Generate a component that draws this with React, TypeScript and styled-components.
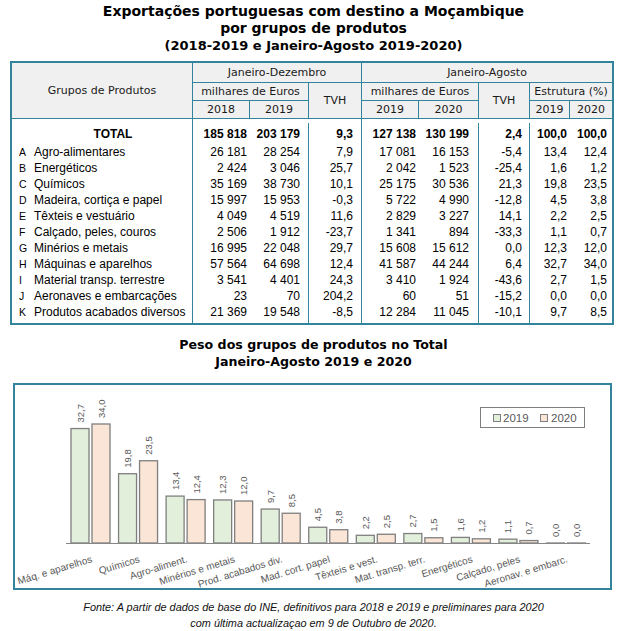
import React from "react";
import styled, { createGlobalStyle } from "styled-components";

const teal = "#31849B";

const Global = createGlobalStyle`
  body { margin: 0; background: #fff; }
  * { box-sizing: border-box; }
`;

const Page = styled.div`
  width: 627px;
  font-family: "Liberation Sans", Arial, sans-serif;
  color: #000;
`;

const Title = styled.h1`
  margin: 0;
  padding-top: 3px;
  text-align: center;
  font: bold 14px/17px "DejaVu Sans", Verdana, sans-serif;
  color: #000;
`;

const TitleSub = styled.span`
  display: block;
  font-size: 13px;
`;

const Grid = styled.div`
  margin: 7px 0 0 10px;
  width: 604px;
  border: 2px solid ${teal};
  display: grid;
  grid-template-columns: 180px 57px 59px 53px 57px 60px 51px 40px 43px;
  grid-template-rows: 20px 18px 18px 25px repeat(10, 16px) 19px;
`;

const HeadCell = styled.div<{ $col: string; $row: string; $first?: boolean }>`
  grid-column: ${(p) => p.$col};
  grid-row: ${(p) => p.$row};
  display: flex;
  align-items: center;
  justify-content: center;
  background: #f0f0f0;
  border-bottom: 1px solid ${teal};
  border-left: ${(p) => (p.$first ? "none" : `1px solid ${teal}`)};
  font: 11px "DejaVu Sans", Verdana, sans-serif;
  color: #1a1a1a;
  white-space: nowrap;
`;

const NameCell = styled.div<{ $total?: boolean; $last?: boolean }>`
  display: flex;
  align-items: center;
  padding-left: 7px;
  padding-top: ${(p) => (p.$total ? "5px" : "0")};
  padding-bottom: ${(p) => (p.$last ? "3px" : "0")};
  font-size: 12px;
  white-space: nowrap;
`;

const Letter = styled.span`
  width: 15px;
  font-size: 10.5px;
`;

const Name = styled.span<{ $total?: boolean }>`
  flex: 1;
  text-align: ${(p) => (p.$total ? "center" : "left")};
  font-weight: ${(p) => (p.$total ? "bold" : "normal")};
`;

type Line = "none" | "solid" | "gap";

const NumCell = styled.div<{ $pr: number; $line: Line; $total?: boolean; $last?: boolean }>`
  display: flex;
  align-items: center;
  justify-content: flex-end;
  padding-right: ${(p) => p.$pr}px;
  padding-top: ${(p) => (p.$total ? "5px" : "0")};
  padding-bottom: ${(p) => (p.$last ? "3px" : "0")};
  border-left: ${(p) => (p.$line === "solid" ? `1px solid ${teal}` : "none")};
  background: ${(p) =>
    p.$line === "gap" ? `linear-gradient(${teal}, ${teal}) 0 4px / 1px 100% no-repeat` : "none"};
  font-size: 12px;
  font-weight: ${(p) => (p.$total ? "bold" : "normal")};
  white-space: nowrap;
`;

const ChartTitle = styled.h2`
  margin: 11px 0 0;
  text-align: center;
  font: bold 12.6px/17px "DejaVu Sans", Verdana, sans-serif;
  color: #000;
`;

const ChartBox = styled.div`
  margin: 13px 0 0 13px;
  width: 599px;
  height: 207px;
  border: 2px solid ${teal};
  svg {
    display: block;
  }
`;

const Footer = styled.p`
  margin: 9px 0 0;
  text-align: center;
  font: italic 10.9px/16px "Liberation Sans", Arial, sans-serif;
  color: #111;
`;

const pads = [2, 8, 8, 2, 9, 7, 2, 5];
const lines: Line[] = ["solid", "none", "gap", "solid", "none", "gap", "gap", "none"];

const total = ["185 818", "203 179", "9,3", "127 138", "130 199", "2,4", "100,0", "100,0"];

const rows: string[][] = [
  ["A", "Agro-alimentares", "26 181", "28 254", "7,9", "17 081", "16 153", "-5,4", "13,4", "12,4"],
  ["B", "Energéticos", "2 424", "3 046", "25,7", "2 042", "1 523", "-25,4", "1,6", "1,2"],
  ["C", "Químicos", "35 169", "38 730", "10,1", "25 175", "30 536", "21,3", "19,8", "23,5"],
  ["D", "Madeira, cortiça e papel", "15 997", "15 953", "-0,3", "5 722", "4 990", "-12,8", "4,5", "3,8"],
  ["E", "Têxteis e vestuário", "4 049", "4 519", "11,6", "2 829", "3 227", "14,1", "2,2", "2,5"],
  ["F", "Calçado, peles, couros", "2 506", "1 912", "-23,7", "1 341", "894", "-33,3", "1,1", "0,7"],
  ["G", "Minérios e metais", "16 995", "22 048", "29,7", "15 608", "15 612", "0,0", "12,3", "12,0"],
  ["H", "Máquinas e aparelhos", "57 564", "64 698", "12,4", "41 587", "44 244", "6,4", "32,7", "34,0"],
  ["I", "Material transp. terrestre", "3 541", "4 401", "24,3", "3 410", "1 924", "-43,6", "2,7", "1,5"],
  ["J", "Aeronaves e embarcações", "23", "70", "204,2", "60", "51", "-15,2", "0,0", "0,0"],
  ["K", "Produtos acabados diversos", "21 369", "19 548", "-8,5", "12 284", "11 045", "-10,1", "9,7", "8,5"],
];

const chart: [string, number, number][] = [
  ["Máq. e aparelhos", 32.7, 34.0],
  ["Químicos", 19.8, 23.5],
  ["Agro-aliment.", 13.4, 12.4],
  ["Minérios e metais", 12.3, 12.0],
  ["Prod. acabados div.", 9.7, 8.5],
  ["Mad. cort. papel", 4.5, 3.8],
  ["Têxteis e vest.", 2.2, 2.5],
  ["Mat. transp. terr.", 2.7, 1.5],
  ["Energéticos", 1.6, 1.2],
  ["Calçado, peles", 1.1, 0.7],
  ["Aeronav. e embarc.", 0.0, 0.0],
];

const fmt = (v: number) => v.toFixed(1).replace(".", ",");

const BASE = 543;
const SCALE = 3.5;
const X0 = 66;
const STEP = 47.55;
const BW = 18;
const C19 = "#E2EFDA";
const C20 = "#FBE5D6";
const STROKE = "#7F7F7F";
const LABEL = "#595959";

function Chart() {
  return (
    <svg width={595} height={203} viewBox="15 385 595 203" fontFamily='"Liberation Sans", Arial, sans-serif'>
      {chart.map(([name, a, b], i) => {
        const start = X0 + i * STEP;
        const x1 = start + 5;
        const x2 = start + 26;
        const h1 = a * SCALE;
        const h2 = b * SCALE;
        const center = start + STEP / 2;
        return (
          <g key={name}>
            <rect x={x1} y={BASE - h1} width={BW} height={Math.max(h1, 0.01)} fill={C19} stroke={STROKE} strokeWidth={1.3} />
            <rect x={x2} y={BASE - h2} width={BW} height={Math.max(h2, 0.01)} fill={C20} stroke={STROKE} strokeWidth={1.3} />
            <text transform={`translate(${x1 + BW / 2 + 3.5},${BASE - h1 - 6}) rotate(-90)`} fontSize={9.5} fill={LABEL}>
              {fmt(a)}
            </text>
            <text transform={`translate(${x2 + BW / 2 + 3.5},${BASE - h2 - 6}) rotate(-90)`} fontSize={9.5} fill={LABEL}>
              {fmt(b)}
            </text>
            <text transform={`translate(${center + 3},${562}) rotate(-17)`} textAnchor="end" fontSize={10} fill={LABEL}>
              {name}
            </text>
          </g>
        );
      })}
      <line x1={X0} x2={590} y1={BASE + 0.5} y2={BASE + 0.5} stroke="#868686" strokeWidth={1} />
      <rect x={480.5} y={407.5} width={104} height={20} fill="#fff" stroke={STROKE} strokeWidth={1} />
      <rect x={493.5} y={414.5} width={7} height={7} fill={C19} stroke={STROKE} strokeWidth={1} />
      <text x={503} y={422} fontSize={11.5} fill={LABEL}>2019</text>
      <rect x={540.5} y={414.5} width={7} height={7} fill={C20} stroke={STROKE} strokeWidth={1} />
      <text x={551} y={422} fontSize={11.5} fill={LABEL}>2020</text>
    </svg>
  );
}

export default function App() {
  return (
    <Page>
      <Global />
      <Title>
        Exportações portuguesas com destino a Moçambique
        <br />
        por grupos de produtos
        <TitleSub>(2018-2019 e Janeiro-Agosto 2019-2020)</TitleSub>
      </Title>

      <Grid>
        <HeadCell $col="1" $row="1 / 4" $first>Grupos de Produtos</HeadCell>
        <HeadCell $col="2 / 5" $row="1">Janeiro-Dezembro</HeadCell>
        <HeadCell $col="5 / 10" $row="1">Janeiro-Agosto</HeadCell>
        <HeadCell $col="2 / 4" $row="2">milhares de Euros</HeadCell>
        <HeadCell $col="4" $row="2 / 4">TVH</HeadCell>
        <HeadCell $col="5 / 7" $row="2">milhares de Euros</HeadCell>
        <HeadCell $col="7" $row="2 / 4">TVH</HeadCell>
        <HeadCell $col="8 / 10" $row="2">Estrutura (%)</HeadCell>
        <HeadCell $col="2" $row="3">2018</HeadCell>
        <HeadCell $col="3" $row="3">2019</HeadCell>
        <HeadCell $col="5" $row="3">2019</HeadCell>
        <HeadCell $col="6" $row="3">2020</HeadCell>
        <HeadCell $col="8" $row="3">2019</HeadCell>
        <HeadCell $col="9" $row="3">2020</HeadCell>

        <NameCell $total>
          <Letter />
          <Name $total>TOTAL</Name>
        </NameCell>
        {total.map((v, i) => (
          <NumCell key={`t${i}`} $pr={pads[i]} $line={lines[i]} $total>
            {v}
          </NumCell>
        ))}

        {rows.map((r, ri) => {
          const last = ri === rows.length - 1;
          return (
            <React.Fragment key={r[0]}>
              <NameCell $last={last}>
                <Letter>{r[0]}</Letter>
                <Name>{r[1]}</Name>
              </NameCell>
              {r.slice(2).map((v, i) => (
                <NumCell key={i} $pr={pads[i]} $line={lines[i] === "gap" ? "solid" : lines[i]} $last={last}>
                  {v}
                </NumCell>
              ))}
            </React.Fragment>
          );
        })}
      </Grid>

      <ChartTitle>
        Peso dos grupos de produtos no Total
        <br />
        Janeiro-Agosto 2019 e 2020
      </ChartTitle>

      <ChartBox>
        <Chart />
      </ChartBox>

      <Footer>
        Fonte: A partir de dados de base do INE, definitivos para 2018 e 2019 e preliminares para 2020
        <br />
        com última actualizaçao em 9 de Outubro de 2020.
      </Footer>
    </Page>
  );
}
